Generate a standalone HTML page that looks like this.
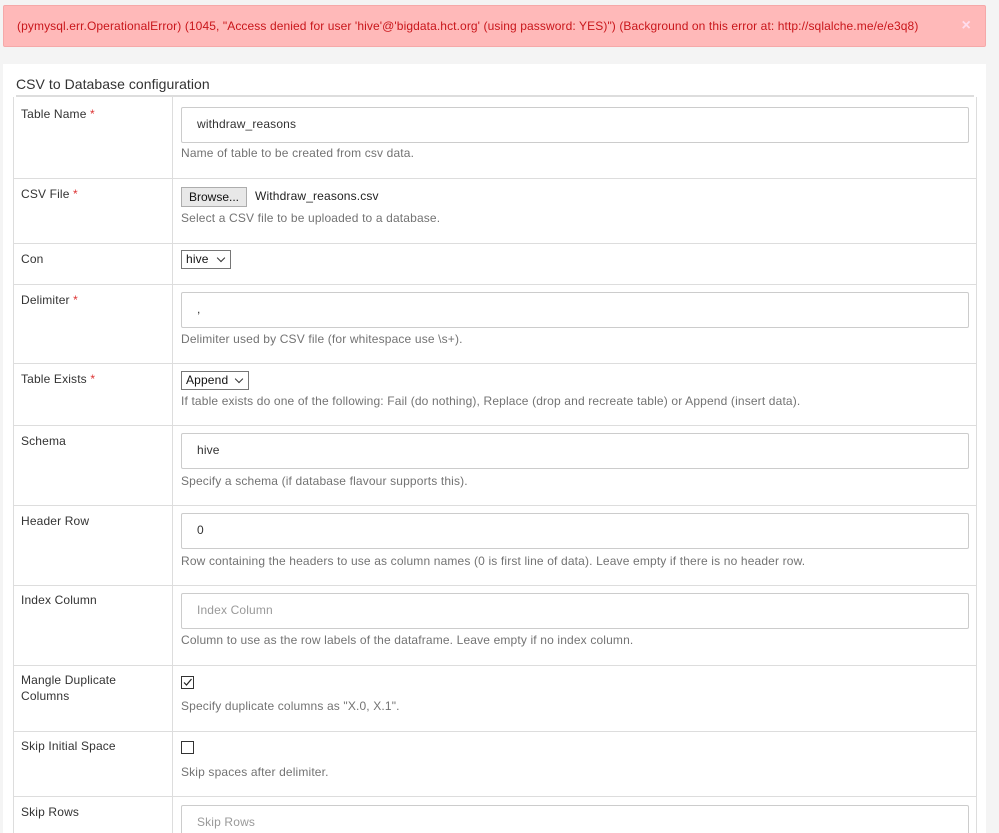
<!DOCTYPE html>
<html style="width:999px;height:833px;overflow:hidden"><head><meta charset="utf-8"><style>
*{box-sizing:border-box;margin:0;padding:0}
body{width:999px;height:833px;overflow:hidden;background:#f4f4f4;font-family:"Liberation Sans",Arial,sans-serif;font-size:12px;letter-spacing:0.15px;color:#333;position:relative}
.alert{position:absolute;left:3px;top:5px;width:983px;height:42px;background:#ffb9b9;border:1px solid #f5a9a9;border-radius:2px;color:#c9161b;font-size:12px;line-height:40px;padding-left:13px;letter-spacing:0.1px}
.alert .x{position:absolute;right:14px;top:0;color:#fde;font-size:16px;font-weight:bold}
.panel{position:absolute;left:3px;top:64px;width:983px;height:800px;background:#fff}
.title{position:absolute;left:16px;top:76px;font-size:14px;color:#333;letter-spacing:0.05px}
.hr{position:absolute;left:16px;top:95px;width:958px;height:2px;background:#ddd}
.tbl{position:absolute;left:13px;top:97px;width:964px;height:760px;border-left:1px solid #ddd;border-right:1px solid #ddd}
.row{position:absolute;left:13px;width:964px;border-bottom:1px solid #ddd}
.lbl{position:absolute;left:8px;top:9px;line-height:16px;color:#333}
.col{position:absolute;left:159px;top:0;bottom:0;width:1px;background:#ddd}
.req{color:#d33}
.inp{position:absolute;left:168px;width:788px;height:36px;border:1px solid #ccc;border-radius:2px;padding-left:15px;line-height:33px;color:#333}
.ph{color:#999}
.help{position:absolute;left:168px;color:#737373}
.sel{position:absolute;left:168px;height:19px;border:1px solid #767676;line-height:16px;padding-left:4px;color:#111;background:#fff}
.sel:after{content:"";position:absolute;right:6px;top:4px;width:5px;height:5px;border-right:1px solid #333;border-bottom:1px solid #333;transform:rotate(45deg)}
.btn{position:absolute;left:168px;top:8px;width:66px;height:20px;background:#e8e8e8;border:1px solid #adadad;text-align:center;line-height:18px;color:#111;letter-spacing:0}
.cb{position:absolute;left:168px;width:13px;height:13px;border:1px solid #333;background:#fff}
</style></head><body>
<div class="alert">(pymysql.err.OperationalError) (1045, "Access denied for user 'hive'@'bigdata.hct.org' (using password: YES)") (Background on this error at: http://sqlalche.me/e/e3q8)<span class="x">×</span></div>
<div class="panel"></div>
<div class="title">CSV to Database configuration</div>
<div class="tbl"></div>
<div class="hr"></div>

<div class="row" style="top:97px;height:82px"><div class="col"></div><div class="lbl">Table Name <span class="req">*</span></div><div class="inp" style="top:10px">withdraw_reasons</div><div class="help" style="top:49px">Name of table to be created from csv data.</div></div>

<div class="row" style="top:179px;height:65px"><div class="col"></div><div class="lbl" style="top:7px">CSV File <span class="req">*</span></div><div class="btn">Browse...</div><div style="position:absolute;left:242px;top:10px;color:#222">Withdraw_reasons.csv</div><div class="help" style="top:32px">Select a CSV file to be uploaded to a database.</div></div>

<div class="row" style="top:244px;height:41px"><div class="col"></div><div class="lbl" style="top:7px">Con</div><div class="sel" style="top:6px;width:50px">hive</div></div>

<div class="row" style="top:285px;height:79px"><div class="col"></div><div class="lbl" style="top:7px">Delimiter <span class="req">*</span></div><div class="inp" style="top:7px">,</div><div class="help" style="top:47px">Delimiter used by CSV file (for whitespace use \s+).</div></div>

<div class="row" style="top:364px;height:62px"><div class="col"></div><div class="lbl" style="top:7px">Table Exists <span class="req">*</span></div><div class="sel" style="top:7px;width:68px">Append</div><div class="help" style="top:30px">If table exists do one of the following: Fail (do nothing), Replace (drop and recreate table) or Append (insert data).</div></div>

<div class="row" style="top:426px;height:80px"><div class="col"></div><div class="lbl" style="top:7px">Schema</div><div class="inp" style="top:7px">hive</div><div class="help" style="top:48px">Specify a schema (if database flavour supports this).</div></div>

<div class="row" style="top:506px;height:80px"><div class="col"></div><div class="lbl" style="top:7px">Header Row</div><div class="inp" style="top:7px">0</div><div class="help" style="top:48px">Row containing the headers to use as column names (0 is first line of data). Leave empty if there is no header row.</div></div>

<div class="row" style="top:586px;height:80px"><div class="col"></div><div class="lbl" style="top:6px">Index Column</div><div class="inp ph" style="top:7px">Index Column</div><div class="help" style="top:47px">Column to use as the row labels of the dataframe. Leave empty if no index column.</div></div>

<div class="row" style="top:666px;height:66px"><div class="col"></div><div class="lbl" style="top:6px">Mangle Duplicate<br>Columns</div><div class="cb" style="top:10px"><svg width="11" height="11" style="position:absolute;left:0;top:0"><path d="M2 5.5 L4.5 8 L9.5 2" fill="none" stroke="#222" stroke-width="1.2"/></svg></div><div class="help" style="top:33px">Specify duplicate columns as "X.0, X.1".</div></div>

<div class="row" style="top:732px;height:65px"><div class="col"></div><div class="lbl" style="top:6px">Skip Initial Space</div><div class="cb" style="top:9px"></div><div class="help" style="top:33px">Skip spaces after delimiter.</div></div>

<div class="row" style="top:797px;height:60px;border-bottom:none"><div class="col"></div><div class="lbl" style="top:7px">Skip Rows</div><div class="inp ph" style="top:8px">Skip Rows</div></div>
</body></html>
